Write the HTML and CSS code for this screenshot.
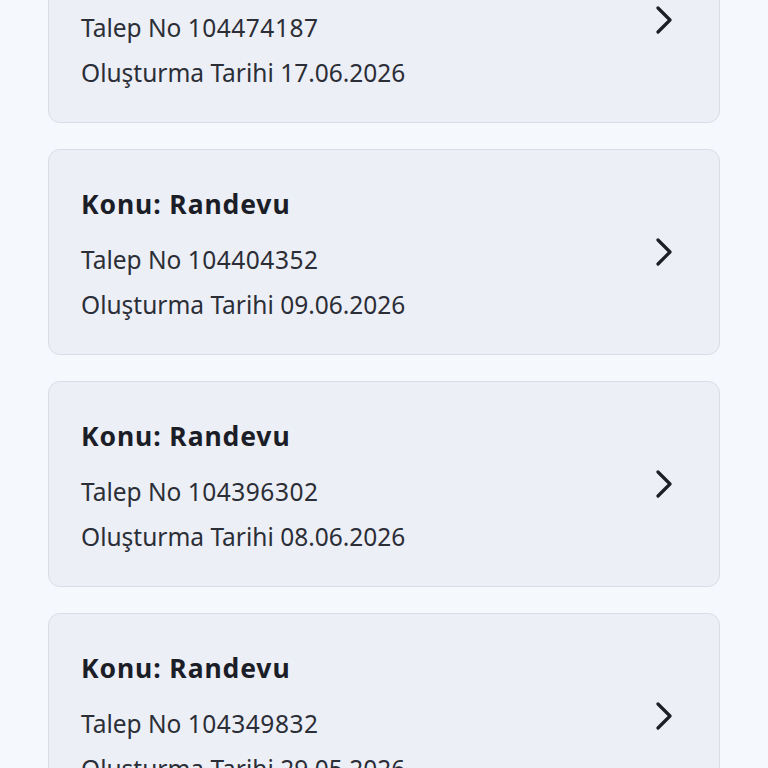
FILE: index.html
```html
<!DOCTYPE html>
<html lang="tr">
<head>
<meta charset="utf-8">
<link rel="stylesheet" href="styles.css">
</head>
<body>
<main class="list">
  <a class="card">
    <div class="info">
      <div class="title">Konu: Randevu</div>
      <div class="line">Talep No <span class="num">104474187</span></div>
      <div class="line">Oluşturma Tarihi 17.06.2026</div>
    </div>
    <svg class="chev" viewBox="0 0 18 28" width="18" height="28"><path d="M3 2 L15 14 L3 26" fill="none" stroke="#1c1f26" stroke-width="3.2" stroke-linecap="round" stroke-linejoin="round"/></svg>
  </a>
  <a class="card">
    <div class="info">
      <div class="title">Konu: Randevu</div>
      <div class="line">Talep No <span class="num">104404352</span></div>
      <div class="line">Oluşturma Tarihi 09.06.2026</div>
    </div>
    <svg class="chev" viewBox="0 0 18 28" width="18" height="28"><path d="M3 2 L15 14 L3 26" fill="none" stroke="#1c1f26" stroke-width="3.2" stroke-linecap="round" stroke-linejoin="round"/></svg>
  </a>
  <a class="card">
    <div class="info">
      <div class="title">Konu: Randevu</div>
      <div class="line">Talep No <span class="num">104396302</span></div>
      <div class="line">Oluşturma Tarihi 08.06.2026</div>
    </div>
    <svg class="chev" viewBox="0 0 18 28" width="18" height="28"><path d="M3 2 L15 14 L3 26" fill="none" stroke="#1c1f26" stroke-width="3.2" stroke-linecap="round" stroke-linejoin="round"/></svg>
  </a>
  <a class="card">
    <div class="info">
      <div class="title">Konu: Randevu</div>
      <div class="line">Talep No <span class="num">104349832</span></div>
      <div class="line">Oluşturma Tarihi 29.05.2026</div>
    </div>
    <svg class="chev" viewBox="0 0 18 28" width="18" height="28"><path d="M3 2 L15 14 L3 26" fill="none" stroke="#1c1f26" stroke-width="3.2" stroke-linecap="round" stroke-linejoin="round"/></svg>
  </a>
</main>
</body>
</html>
```

FILE: styles.css
```css
html, body {
  margin: 0;
  padding: 0;
  background: #f5f8fd;
  height: 768px;
  overflow: hidden;
}
body {
  font-family: "Noto Sans", "Open Sans", sans-serif;
  color: #2b2e36;
}
.list {
  display: flex;
  flex-direction: column;
  gap: 26px;
  padding: 0 48px;
  margin-top: -83px;
}
.card {
  box-sizing: border-box;
  height: 206px;
  display: flex;
  align-items: center;
  justify-content: space-between;
  padding: 0 46px 0 32px;
  background: #edeff7;
  border: 1.5px solid #d9dce4;
  border-radius: 12px;
}
.info {
  display: flex;
  flex-direction: column;
  padding-top: 11px;
}
.title {
  font-size: 26.5px;
  font-weight: 700;
  letter-spacing: 0.9px;
  line-height: 32px;
  color: #1b1e27;
  margin-bottom: 17px;
}
.line {
  font-size: 24.5px;
  line-height: 45px;
}
.num {
  letter-spacing: 0.5px;
}
.chev {
  display: block;
}
```
